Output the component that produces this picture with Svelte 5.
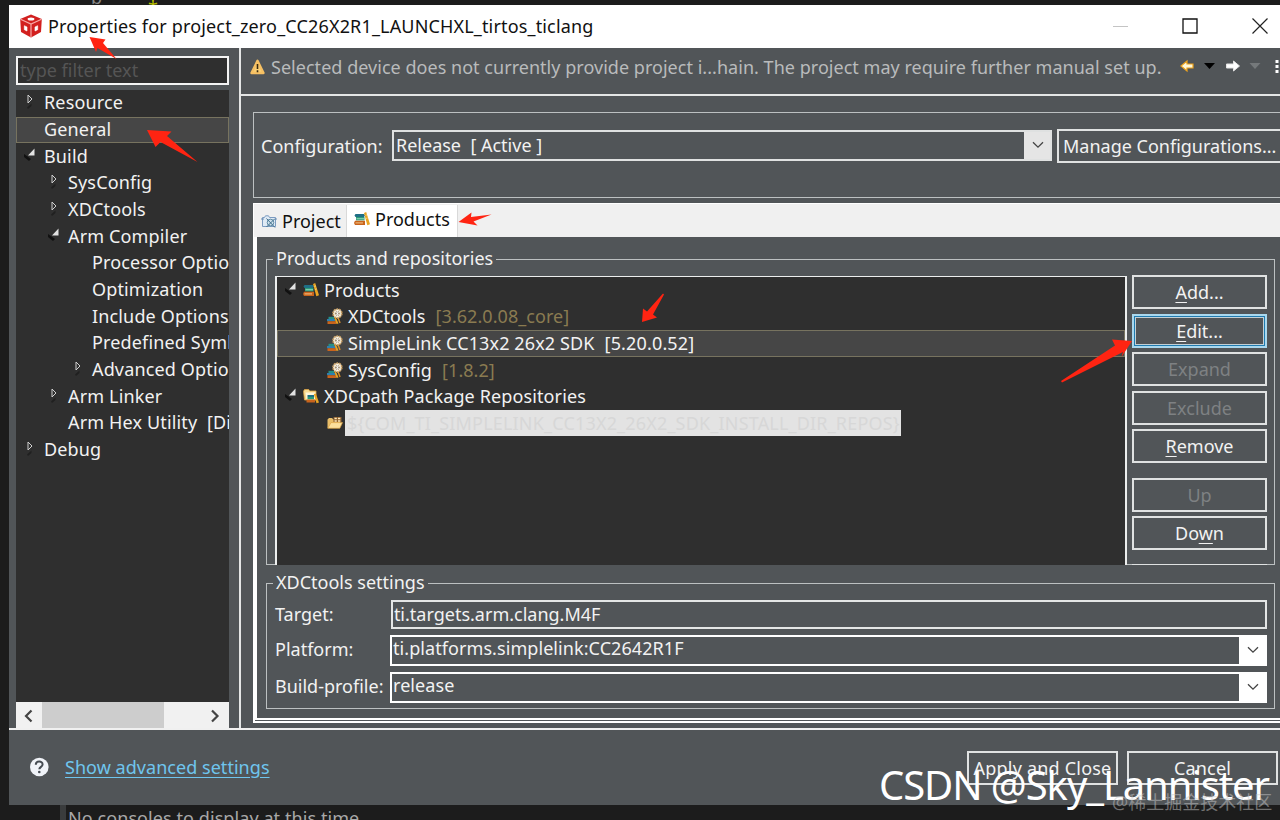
<script>
    let filter = $state('');

    const nav = [
        { label: 'Resource', level: 0, arrow: 'closed' },
        { label: 'General', level: 0, selected: true },
        { label: 'Build', level: 0, arrow: 'open' },
        { label: 'SysConfig', level: 1, arrow: 'closed' },
        { label: 'XDCtools', level: 1, arrow: 'closed' },
        { label: 'Arm Compiler', level: 1, arrow: 'open' },
        { label: 'Processor Options', level: 2 },
        { label: 'Optimization', level: 2 },
        { label: 'Include Options', level: 2 },
        { label: 'Predefined Symbols', level: 2 },
        { label: 'Advanced Options', level: 2, arrow: 'closed' },
        { label: 'Arm Linker', level: 1, arrow: 'closed' },
        { label: 'Arm Hex Utility  [Disabled]', level: 1 },
        { label: 'Debug', level: 0, arrow: 'closed' }
    ];

    const products = [
        { label: 'Products', level: 0, arrow: 'open', icon: 'books' },
        { label: 'XDCtools', version: '[3.62.0.08_core]', level: 1, icon: 'tool' },
        { label: 'SimpleLink CC13x2 26x2 SDK', version: '[5.20.0.52]', level: 1, icon: 'tool', selected: true },
        { label: 'SysConfig', version: '[1.8.2]', level: 1, icon: 'tool' },
        { label: 'XDCpath Package Repositories', level: 0, arrow: 'open', icon: 'repo' },
        { label: '${COM_TI_SIMPLELINK_CC13X2_26X2_SDK_INSTALL_DIR_REPOS}', level: 1, icon: 'folder', marked: true }
    ];

    // "key" is the position of the underlined mnemonic
    const actions = [
        { label: 'Add...', key: 0 },
        { label: 'Edit...', key: 0, focused: true },
        { label: 'Expand', disabled: true },
        { label: 'Exclude', disabled: true },
        { label: 'Remove', key: 0 },
        { label: 'Up', disabled: true, gap: true },
        { label: 'Down', key: 2 }
    ];
</script>

{#snippet twisty(kind)}
    <svg class="twisty" width="14" height="18" viewBox="0 0 14 18">
        {#if kind === 'closed'}
            <path d="M5 2v8l4-4z" fill="none" stroke="#d0d0d0" stroke-width="1" />
            <path d="M4 14.500l4.500-4v2.500L5 16z" fill="#202020" />
        {:else if kind === 'open'}
            <path d="M11.500 1.500v7H5z" fill="#e2e2e2" />
            <path d="M1 7l7 5-2 2-5-4z" fill="#111" />
        {/if}
    </svg>
{/snippet}

{#snippet chevron()}
    <svg width="12" height="8" viewBox="0 0 12 8">
        <path d="M1 1.200l5 5 5-5" fill="none" stroke="#444" stroke-width="1.300" />
    </svg>
{/snippet}

{#snippet icon(name)}
    <svg class="icon" width="16" height="16" viewBox="0 0 16 16">
        {#if name === 'books'}
            <path d="M1.500 3H10l1 1.500-1 1.500H1.500L.5 4.500z" fill="#1f6f86" />
            <path d="M2 6h8.500v3.400H2z" fill="#2c9a76" />
            <path d="M2.500 7.200h7.500v1.100H2.500z" fill="#8fd8bb" />
            <path d="M1 9.800h10V14H1L0 11.900z" fill="#c9641c" />
            <path d="M1.500 11.400H9v1H1.500z" fill="#f3c58b" />
            <path d="M10 2l2.200-.9L16 13.300l-2.700.9z" fill="#e8a423" />
            <path d="M11.600 4.300l1-.3M12.400 7.300l1-.3" stroke="#fff2b0" />
        {:else if name === 'tool'}
            <path d="M1.500 8.800H7V11H1.500z" fill="#268f84" />
            <path d="M0 11h8.500v2.200H0z" fill="#2e7fae" />
            <path d="M.5 13.200H9V16H.5z" fill="#c9641c" />
            <path d="M8.500 8.500l3 7-2 .5-2.500-7z" fill="#e8a423" />
            <path d="M11 9.500l2 5.500" stroke="#d98e2a" stroke-width="1.500" />
            <circle cx="10.400" cy="5.500" r="4.500" fill="#efe2c8" stroke="#c49a5f" stroke-width="1.500" stroke-dasharray="1.800 1" />
            <circle cx="10.400" cy="5.500" r="2.200" fill="#8a7557" />
            <path d="M7.500 3l6 5M13.500 3l-6 5M10.400 2v7" stroke="#fff" stroke-width=".8" />
        {:else if name === 'repo'}
            <path d="M.5 3.200L1.500 1.500h4.200l1 1.500h6.300V12H1.500z" fill="#f8dc93" stroke="#dca344" stroke-width=".8" />
            <path d="M2.500 4.500h10v7H3.500z" fill="#fff6d8" />
            <path d="M4.500 7H11v2H4.500z" fill="#1f6f86" />
            <path d="M4.500 9H11v2.300H4.500z" fill="#2c9a76" />
            <path d="M3.500 11.500h8.500V14.500H3.500z" fill="#c9641c" />
            <path d="M10.800 6l2-.5L16 14.500l-2.500.8z" fill="#e8a423" />
        {:else if name === 'folder'}
            <path d="M.5 13V4.500L2 3h3l1.500 1.500H13V13z" fill="#e8bd68" />
            <path d="M6.500 2h8v5h-8z" fill="#8d5f2e" />
            <path d="M7.500 2.800h2.300v1.500H7.500zM11 2.800h2.300v1.500H11zM7.500 5.200h2.300v1.500H7.500zM11 5.200h2.300v1.500H11z" fill="#ffe9b8" />
            <path d="M.8 13.300L4 7.600h11.500l-2.700 5.700z" fill="#fbdf9c" stroke="#dca344" stroke-width=".7" />
        {:else if name === 'project'}
            <path d="M1.500 13.500v-9h2l1-1.700h3l1 1.700h6v9z" fill="#dfeaf5" stroke="#7b9bc0" />
            <path d="M0 6h3M13.500 6H16" stroke="#6d8fb5" />
            <circle cx="9.500" cy="9.500" r="3.300" fill="#cfe0ec" stroke="#5f8ba5" />
            <path d="M5.500 5.500l8.500 9M13.500 6l-8 8" stroke="#3f6f8c" />
        {/if}
    </svg>
{/snippet}

<div class="desktop">
    <span class="code-b">b</span>
    <span class="code-star">*</span>
    <div class="console">No consoles to display at this time.</div>

    <div class="window">
        <header class="titlebar">
            <svg class="cube" width="24" height="24" viewBox="0 0 24 24">
                <path d="M12 .5L22.800 5l-.8 13L12 23.500 2 18 1.200 5z" fill="#d2201f" />
                <path d="M1.500 5.300L12 10l10.500-4.700M12 10v13.300" fill="none" stroke="#f7a9a6" stroke-width="1.200" />
                <ellipse cx="12" cy="5" rx="3.400" ry="1.500" fill="#fff" />
                <path d="M5.300 11.700l2.700 1.300v4L5.300 15.700zM18.700 11.700L16 13v4l2.700-1.300z" fill="#fff" stroke="#fff" stroke-width=".6" stroke-linejoin="round" />
            </svg>
            <h1>Properties for project_zero_CC26X2R1_LAUNCHXL_tirtos_ticlang</h1>
            <div class="window-buttons">
                <svg width="16" height="16" viewBox="0 0 16 16"><path d="M1 8.500h15" stroke="#c4c4c4" /></svg>
                <svg width="16" height="16" viewBox="0 0 16 16"><path d="M1 1h14v14H1z" fill="none" stroke="#111" stroke-width="1.300" /></svg>
                <svg width="16" height="16" viewBox="0 0 16 16"><path d="M.5 .5l15 15M15.500 .5l-15 15" stroke="#222" stroke-width="1.200" /></svg>
            </div>
        </header>

        <div class="body">
            <aside>
                <input class="filter" placeholder="type filter text" bind:value={filter} />
                <div class="nav">
                    {#each nav as item}
                        <div class="nav-row level-{item.level}" class:selected={item.selected}>
                            {@render twisty(item.arrow)}
                            <span>{item.label}</span>
                        </div>
                    {/each}
                </div>
                <div class="scrollbar">
                    <svg width="26" height="26" viewBox="0 0 26 26"><path d="M15.500 8.500L10 14l5.500 5.500" fill="none" stroke="#444" stroke-width="2.200" /></svg>
                    <div class="thumb"></div>
                    <svg width="26" height="26" viewBox="0 0 26 26"><path d="M9 8.500l5.500 5.500L9 19.500" fill="none" stroke="#444" stroke-width="2.200" /></svg>
                </div>
            </aside>

            <main>
                <div class="message">
                    <svg class="warn" width="15" height="16" viewBox="0 0 15 16">
                        <path d="M7.500 1.800L13.500 14H1.500z" fill="#f9cf74" stroke="#f6c063" stroke-width="2.400" stroke-linejoin="round" />
                        <path d="M7.500 5v5M7.500 11.300v2" stroke="#3a2a10" stroke-width="1.600" />
                    </svg>
                    <p>Selected device does not currently provide project i...hain. The project may require further manual set up.</p>
                    <svg class="history" width="104" height="20" viewBox="0 0 104 20">
                        <path d="M1 10l6-5v3h6v4H7v3z" fill="#fff8d8" stroke="#eda21c" stroke-width="1.200" />
                        <path d="M24 7h11l-5.500 6z" fill="#000" />
                        <path d="M59.500 10l-6-5v3h-7v4h7v3z" fill="#fff" stroke="#e4e4e4" />
                        <path d="M69.500 7h11L75 13z" fill="#75797b" />
                        <path d="M95.500 4h3v3h-3zM95.500 9h3v3h-3zM95.500 14h3v3h-3z" fill="#fff" />
                    </svg>
                </div>

                <section class="config">
                    <label for="configuration">Configuration:</label>
                    <div class="combo config-combo" id="configuration">
                        <span>Release&nbsp; [ Active ]</span>
                        <div class="drop">{@render chevron()}</div>
                    </div>
                    <button class="manage">Manage Configurations...</button>
                </section>

                <div class="tabs">
                    <div class="tab">{@render icon('project')}Project</div>
                    <div class="tab active">{@render icon('books')}Products</div>
                </div>

                <div class="panel">
                    <section class="group products">
                        <h2>Products and repositories</h2>
                        <div class="product-tree">
                            {#each products as item}
                                <div class="product-row level-{item.level}" class:selected={item.selected}>
                                    {@render twisty(item.arrow)}
                                    {@render icon(item.icon)}
                                    <span class="name" class:marked={item.marked}>{item.label}</span>
                                    {#if item.version}
                                        <span class="version">{item.version}</span>
                                    {/if}
                                </div>
                            {/each}
                        </div>
                        <div class="actions">
                            {#each actions as action}
                                <button class:focused={action.focused} class:gap={action.gap} disabled={action.disabled}>
                                    {#if action.key !== undefined}
                                        {action.label.slice(0, action.key)}<u>{action.label[action.key]}</u>{action.label.slice(action.key + 1)}
                                    {:else}
                                        {action.label}
                                    {/if}
                                </button>
                            {/each}
                            <div class="cut"></div>
                        </div>
                    </section>

                    <section class="group settings">
                        <h2>XDCtools settings</h2>
                        <div class="field">
                            <span class="field-label">Target:</span>
                            <div class="textbox">ti.targets.arm.clang.M4F</div>
                        </div>
                        <div class="field">
                            <span class="field-label">Platform:</span>
                            <div class="combo"><span>ti.platforms.simplelink:CC2642R1F</span><div class="drop">{@render chevron()}</div></div>
                        </div>
                        <div class="field">
                            <span class="field-label">Build-profile:</span>
                            <div class="combo"><span>release</span><div class="drop">{@render chevron()}</div></div>
                        </div>
                    </section>
                </div>
            </main>
        </div>

        <footer>
            <svg class="help" width="20" height="20" viewBox="0 0 20 20">
                <circle cx="10.300" cy="10" r="9.300" fill="#f0f3f8" />
                <path d="M6.800 7.800C6.800 3.600 13.600 3.600 13.600 7.500c0 2.300-3.300 2.400-3.300 4.800" fill="none" stroke="#454b52" stroke-width="2" />
                <circle cx="10.300" cy="15" r="1.300" fill="#454b52" />
            </svg>
            <a href="#advanced">Show advanced settings</a>
            <div class="footer-buttons">
                <button>Apply and Close</button>
                <button>Cancel</button>
            </div>
        </footer>
    </div>

    <!-- hand-drawn pointers over the dialog -->
    <svg class="pointers" width="1280" height="820" viewBox="0 0 1280 820">
        <path d="M89.500 37l16 2.500-2.500 3.500 13.500 16-19-11-1.500 4z" />
        <path d="M147 130l24.500 1.500-4.500 4.500 30.500 26-37-20-5 5z" />
        <path d="M458.500 222l13-9.500-.5 4.500 20.500-2.500-18 7 4 4z" />
        <path d="M642 322l1-13.500 4 3L663 293.500l1 1-11 20 4 3z" />
        <path d="M1132 341l-20-1.500 3 6L1061 381l1 1.500 61-30.500-1.500 5z" />
    </svg>

    <div class="csdn">CSDN @Sky_Lannister</div>
    <div class="juejin">@稀土掘金技术社区</div>
</div>

<style>
    :global(body) {
        margin: 0;
        overflow: hidden;
    }

    .desktop {
        position: relative;
        box-sizing: border-box;
        width: 1280px;
        height: 820px;
        padding: 5px 0 0 9px;
        overflow: hidden;
        background: #1c1c1c;
        color: #f2f2f2;
        font-family: "Noto Sans", "Open Sans", sans-serif;
        font-size: 18px;
        line-height: 26px;
    }

    .desktop * {
        box-sizing: border-box;
    }

    .code-b,
    .code-star,
    .console {
        position: absolute;
    }

    .code-b {
        left: 91px;
        top: -16px;
        color: #888;
    }

    .code-star {
        left: 148px;
        top: -6px;
        color: #b5bd00;
    }

    .console {
        left: 60px;
        top: 805px;
        padding-left: 2px;
        border-left: 6px solid #3a3c3d;
        color: #a8a8a8;
        letter-spacing: 0.08px;
    }

    .window {
        position: relative;
        display: flex;
        flex-direction: column;
        width: 1280px;
        height: 800px;
        background: #515558;
    }

    .titlebar {
        display: flex;
        align-items: center;
        height: 43px;
        padding: 0 21px 1px 10px;
        background: #fff;
        color: #111;
    }

    .cube {
        margin-right: 5px;
    }

    h1,
    h2,
    p {
        margin: 0;
        font-size: inherit;
        font-weight: normal;
        white-space: nowrap;
    }

    h1 {
        letter-spacing: 0.16px;
    }

    .window-buttons {
        display: flex;
        gap: 54px;
        margin-left: auto;
    }

    .body {
        display: flex;
        height: 680px;
    }

    aside {
        display: flex;
        flex-direction: column;
        width: 232px;
        padding: 8px 10px 0 7px;
        border-right: 2px solid #e4e6e6;
    }

    .filter {
        width: 213px;
        height: 29px;
        padding: 0 3px 2px 2px;
        border: 2px solid #f4f4f4;
        border-radius: 0;
        background: #2f2f2f;
        color: #eee;
        font: inherit;
    }

    .filter::placeholder {
        color: #555;
        opacity: 1;
    }

    .nav {
        width: 213px;
        height: 612px;
        margin-top: 5px;
        overflow: hidden;
        background: #2f2f2f;
        letter-spacing: 0.15px;
    }

    .nav-row,
    .product-row {
        display: flex;
        align-items: center;
        height: 26.67px;
        padding-bottom: 2px;
        border: 1px solid transparent;
        white-space: pre;
    }

    .nav-row {
        padding-left: 6px;
    }

    .nav-row span {
        margin-left: 7px;
    }

    .nav-row.level-1 {
        padding-left: 30px;
    }

    .nav-row.level-2 {
        padding-left: 54px;
    }

    .selected {
        border-color: #77735f;
        background: #464646;
    }

    .twisty {
        flex: none;
    }

    .icon {
        flex: none;
    }

    .scrollbar {
        display: flex;
        width: 213px;
        height: 26px;
        background: #f1f1f1;
    }

    .thumb {
        width: 122px;
        margin-right: 39px;
        background: #cdcdcd;
    }

    main {
        display: flex;
        flex: 1;
        flex-direction: column;
        min-width: 0;
    }

    .message {
        display: flex;
        height: 48px;
        padding: 6px 0 0 9px;
        border-bottom: 2px solid #e4e6e6;
        color: #b9bbbc;
    }

    .message p {
        width: 892px;
        margin-left: 6px;
        letter-spacing: 0.03px;
    }

    .warn {
        margin-top: 5px;
    }

    .history {
        margin: 2px 0 0 17px;
    }

    .config {
        display: flex;
        height: 86px;
        margin: 16px 0 0 12px;
        padding: 16px 0 0 7px;
        border: 1px solid #bcc0c1;
        border-right: 0;
    }

    .config label {
        flex: none;
        width: 131px;
        padding-top: 4px;
    }

    .combo {
        display: flex;
        flex: none;
        align-items: stretch;
        height: 31px;
        border: 2px solid #fff;
    }

    .combo span {
        flex: 1;
        padding-left: 2px;
    }

    .drop {
        display: flex;
        align-items: center;
        justify-content: center;
        width: 26px;
        padding: 0 0 2px 2px;
        background: #fff;
    }

    .config-combo {
        width: 660px;
        margin-top: 1px;
        border-color: #dfe1e1;
    }

    .config-combo .drop {
        background: #e5e5e5;
    }

    button {
        flex: none;
        padding: 0;
        border: 2px solid #e0e2e2;
        border-radius: 0;
        background: #515558;
        color: #f2f2f2;
        font: inherit;
        white-space: nowrap;
    }

    .manage {
        width: 240px;
        height: 34px;
        margin-left: 5px;
        padding-left: 4px;
        text-align: left;
    }

    .tabs {
        display: flex;
        height: 34px;
        margin: 5px 0 0 12px;
        padding: 1px 0 0 2px;
        border-top: 1px solid #fff;
        border-left: 1px solid #fff;
        background: #f0f0f0;
        color: #111;
    }

    .tab {
        display: flex;
        align-items: center;
        gap: 5px;
        width: 91px;
        padding: 0 0 1px 5px;
        border-right: 1px solid #d9d9d9;
    }

    .tab.active {
        width: 111px;
        padding: 0 0 4px 7px;
        background: #fff;
    }

    .panel {
        height: 486px;
        margin-left: 12px;
        padding: 9px 14px 0 9px;
        border-bottom: 5px double #fff;
        border-left: 4px solid #fff;
    }

    .group {
        position: relative;
        width: 1009px;
        margin-top: 13px;
        border: 1px solid #bcc0c1;
    }

    /* the heading sits on the top edge of the frame */
    h2 {
        position: absolute;
        top: -15px;
        left: 6px;
        padding: 0 3px;
        background: #515558;
    }

    .products {
        display: flex;
        height: 306px;
        padding: 16px 0 0 8px;
    }

    .product-tree {
        width: 852px;
        height: 289px;
        padding-top: 0;
        border: 2px solid #eceeee;
        border-top-width: 1px;
        border-bottom: 0;
        background: #2f2f2f;
        letter-spacing: 0.12px;
    }

    .product-row {
        padding: 0 0 1px 6px;
    }

    .product-row.level-1 {
        padding-left: 30px;
    }

    .product-row .icon {
        margin: 0 5px 0 5px;
    }

    .version {
        margin-left: 10px;
        letter-spacing: 0.05px;
        color: #8a7b51;
    }

    .selected .version {
        color: inherit;
        letter-spacing: 0.15px;
    }

    .marked {
        width: 556px;
        margin-left: -3px;
        padding-left: 2px;
        background: #e3e3e3;
        color: #d7d7d7;
        letter-spacing: 0.18px;
    }

    .actions {
        display: flex;
        flex-direction: column;
        gap: 4.500px;
        width: 135px;
        margin: -1px 0 0 5px;
    }

    .actions button {
        height: 34px;
    }

    .actions button:disabled {
        color: #7e8183;
    }

    .actions .focused {
        border-color: #a9d8ee;
        box-shadow: inset 0 0 0 1px #1f7bb0, inset 0 0 0 2px #c2d0d6;
    }

    .actions .gap {
        margin-top: 10px;
    }

    u {
        text-underline-offset: 3px;
    }

    .cut {
        height: 2px;
        margin-top: 9px;
        border-top: 1px solid #dfe1e1;
    }

    .settings {
        height: 126px;
        margin-top: 18px;
        padding: 16px 7px 0 8px;
    }

    .field {
        display: flex;
        margin-bottom: 6px;
    }

    .field-label {
        width: 116px;
        padding-top: 1px;
    }

    .textbox {
        width: 877px;
        height: 29px;
        padding-left: 1px;
        border: 2px solid #e4e6e6;
        line-height: 24px;
    }

    .field .combo {
        width: 877px;
    }

    .field .combo span {
        padding-left: 1px;
        line-height: 23px;
        letter-spacing: 0.07px;
    }

    footer {
        display: flex;
        height: 77px;
        padding: 21px 0 0 20px;
        border-top: 2px solid #f0f0f0;
    }

    .help {
        margin-top: 6px;
    }

    footer a {
        margin: 3px 0 0 16px;
        color: #6fc5ee;
        letter-spacing: 0.04px;
        text-decoration: underline;
        text-underline-offset: 3px;
    }

    .footer-buttons {
        display: flex;
        gap: 9px;
        margin-left: auto;
        padding-right: 11px;
    }

    .footer-buttons button {
        width: 151px;
        height: 34px;
        letter-spacing: 0.2px;
    }

    .pointers {
        position: absolute;
        top: 0;
        left: 0;
        fill: #ff2412;
        pointer-events: none;
    }

    .csdn {
        position: absolute;
        left: 879px;
        top: 759px;
        color: #fff;
        font-size: 40px;
        letter-spacing: -1.080px;
        line-height: 52px;
        white-space: nowrap;
    }

    .juejin {
        position: absolute;
        left: 1112px;
        top: 789px;
        color: rgba(200, 200, 200, 0.5);
        font-family: "Noto Sans", "Noto Sans CJK SC", sans-serif;
        white-space: nowrap;
    }
</style>
